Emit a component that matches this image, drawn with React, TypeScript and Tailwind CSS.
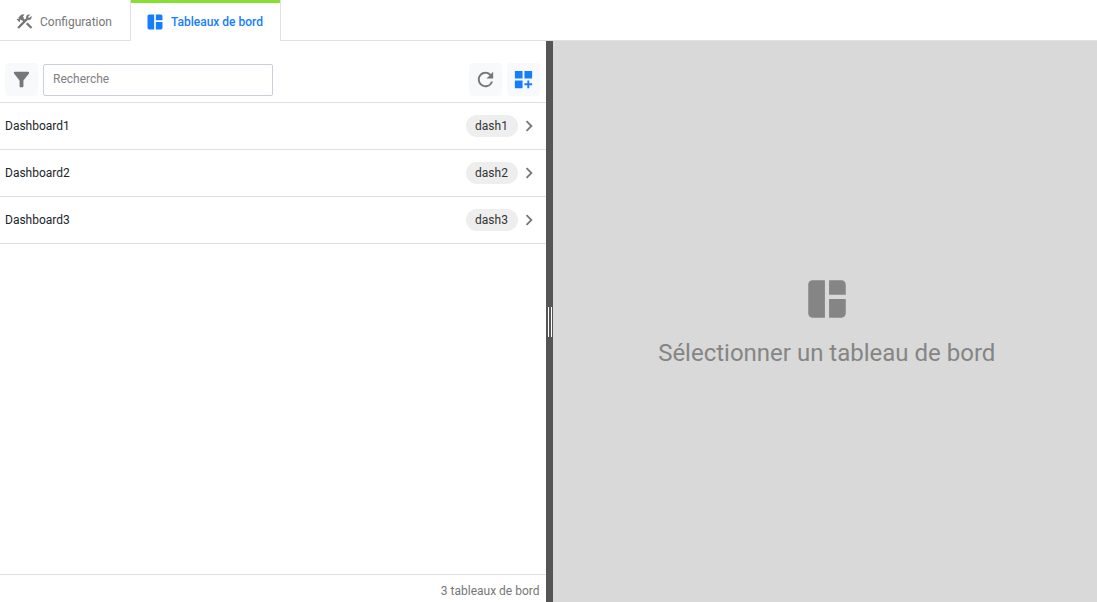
import type { ReactNode } from "react";

const ICONS = {
  tools:
    "M13.78 15.3L19.78 21.3L21.89 19.14L15.89 13.14L13.78 15.3M17.5 10.1C17.11 10.1 16.69 10.05 16.36 9.91L4.97 21.25L2.86 19.14L10.27 11.74L8.5 9.96L7.78 10.66L6.33 9.25V12.11L5.63 12.81L2.11 9.25L2.81 8.55H5.62L4.22 7.14L7.78 3.58C8.95 2.41 10.83 2.41 12 3.58L9.89 5.74L11.3 7.14L10.59 7.85L12.38 9.63L14.2 7.75C14.06 7.42 14 7 14 6.63C14 4.66 15.56 3.11 17.5 3.11C18.09 3.11 18.61 3.25 19.08 3.53L16.41 6.2L17.91 7.7L20.58 5.03C20.86 5.5 21 6 21 6.63C21 8.55 19.45 10.1 17.5 10.1Z",
  board: "M11 21H5c-1.1 0-2-.9-2-2V5c0-1.1.9-2 2-2h6v18zm2 0h6c1.1 0 2-.9 2-2v-7h-8v9zm8-11V5c0-1.1-.9-2-2-2h-6v7h8z",
  filter:
    "M4.25 5.61C6.27 8.2 10 13 10 13v6c0 .55.45 1 1 1h2c.55 0 1-.45 1-1v-6s3.72-4.8 5.74-7.39A.998.998 0 0018.95 4H5.04c-.83 0-1.3.95-.79 1.61z",
  refresh:
    "M17.65 6.35A7.958 7.958 0 0012 4c-4.42 0-7.99 3.58-7.99 8s3.57 8 7.99 8c3.73 0 6.84-2.55 7.73-6h-2.08A5.99 5.99 0 0112 18c-3.31 0-6-2.69-6-6s2.69-6 6-6c1.66 0 3.14.69 4.22 1.78L13 11h7V4l-2.35 2.35z",
  addBoard: "M3 3h8v8H3zm10 0h8v8h-8zM3 13h8v8H3zm15 0h-2v3h-3v2h3v3h2v-3h3v-2h-3z",
  chevron: "M10 6L8.59 7.41 13.17 12l-4.58 4.59L10 18l6-6z",
};

function Icon({ name, className }: { name: keyof typeof ICONS; className: string }) {
  return (
    <svg viewBox="0 0 24 24" fill="currentColor" aria-hidden="true" className={`shrink-0 ${className}`}>
      <path d={ICONS[name]} />
    </svg>
  );
}

function ToolButton({ label, children }: { label: string; children: ReactNode }) {
  return (
    <button
      type="button"
      aria-label={label}
      className="flex size-[33px] shrink-0 items-center justify-center rounded-sm bg-[#f8f9fb] pb-px text-[#777]"
    >
      {children}
    </button>
  );
}

const dashboards = [
  { name: "Dashboard1", id: "dash1" },
  { name: "Dashboard2", id: "dash2" },
  { name: "Dashboard3", id: "dash3" },
];

export default function App() {
  return (
    <div className="flex h-screen flex-col bg-white font-[Roboto,sans-serif] text-xs text-[#212529]">
      <nav className="flex h-[41px] shrink-0">
        <a href="#configuration" className="flex items-center gap-1.5 border-b border-[#dee2e6] pt-[3px] pr-[18px] pl-[15px] text-[#777]">
          <Icon name="tools" className="size-[19px]" />
          Configuration
        </a>
        <a
          href="#dashboards"
          aria-current="page"
          className="flex items-center gap-1.5 border-x border-x-[#dee2e6] pt-0.5 pr-[17px] pl-3.5 font-medium text-[#147eff] shadow-[inset_0_3px_0_#86df33]"
        >
          <Icon name="board" className="size-5" />
          Tableaux de bord
        </a>
        <div className="flex-1 border-b border-[#dee2e6]" />
      </nav>

      <main className="flex min-h-0 flex-1">
        <section className="flex w-[calc(50%-3px)] flex-col">
          <div className="flex items-end justify-between border-b border-[#dee0e4] px-[5px] pt-[22px] pb-1.5">
            <div className="flex items-center gap-[5px]">
              <ToolButton label="Filtrer">
                <Icon name="filter" className="size-[23px]" />
              </ToolButton>
              <input
                type="search"
                aria-label="Recherche"
                placeholder="Recherche"
                className="h-8 w-[230px] rounded-xs border border-[#cccfdb] px-[9px] pb-0.5 outline-none placeholder:text-[#808080]"
              />
            </div>
            <div className="flex gap-[5px] pr-px">
              <ToolButton label="Actualiser">
                <Icon name="refresh" className="size-[23px]" />
              </ToolButton>
              <ToolButton label="Ajouter un tableau de bord">
                <Icon name="addBoard" className="size-[23px] text-[#147eff]" />
              </ToolButton>
            </div>
          </div>

          <ul className="flex-1">
            {dashboards.map((d) => (
              <li key={d.id} className="border-b border-[#dee0e4]">
                <a href={`#${d.id}`} className="flex h-[46px] items-center pr-1.5 pl-[5px]">
                  <span className="flex-1">{d.name}</span>
                  <span className="flex h-[22px] w-[52px] items-center justify-center rounded-full bg-[#eee] text-[#333]">{d.id}</span>
                  <Icon name="chevron" className="size-[22px] text-[#777]" />
                </a>
              </li>
            ))}
          </ul>

          <footer className="flex h-7 items-center justify-end border-t border-[#dee0e4] pt-1 pr-1.5 text-[#777]">
            3 tableaux de bord
          </footer>
        </section>

        <div role="separator" aria-orientation="vertical" className="flex w-[7px] shrink-0 items-center justify-end gap-0.5 bg-[#555] pr-px">
          <span className="h-[30px] w-px bg-white" />
          <span className="h-[30px] w-px bg-white" />
        </div>

        <section className="flex flex-1 flex-col items-center justify-center gap-[13px] bg-[#d9d9d9] pb-px pl-1 text-[#858585]">
          <Icon name="board" className="size-[50px]" />
          <p className="text-2xl">Sélectionner un tableau de bord</p>
        </section>
      </main>
    </div>
  );
}
